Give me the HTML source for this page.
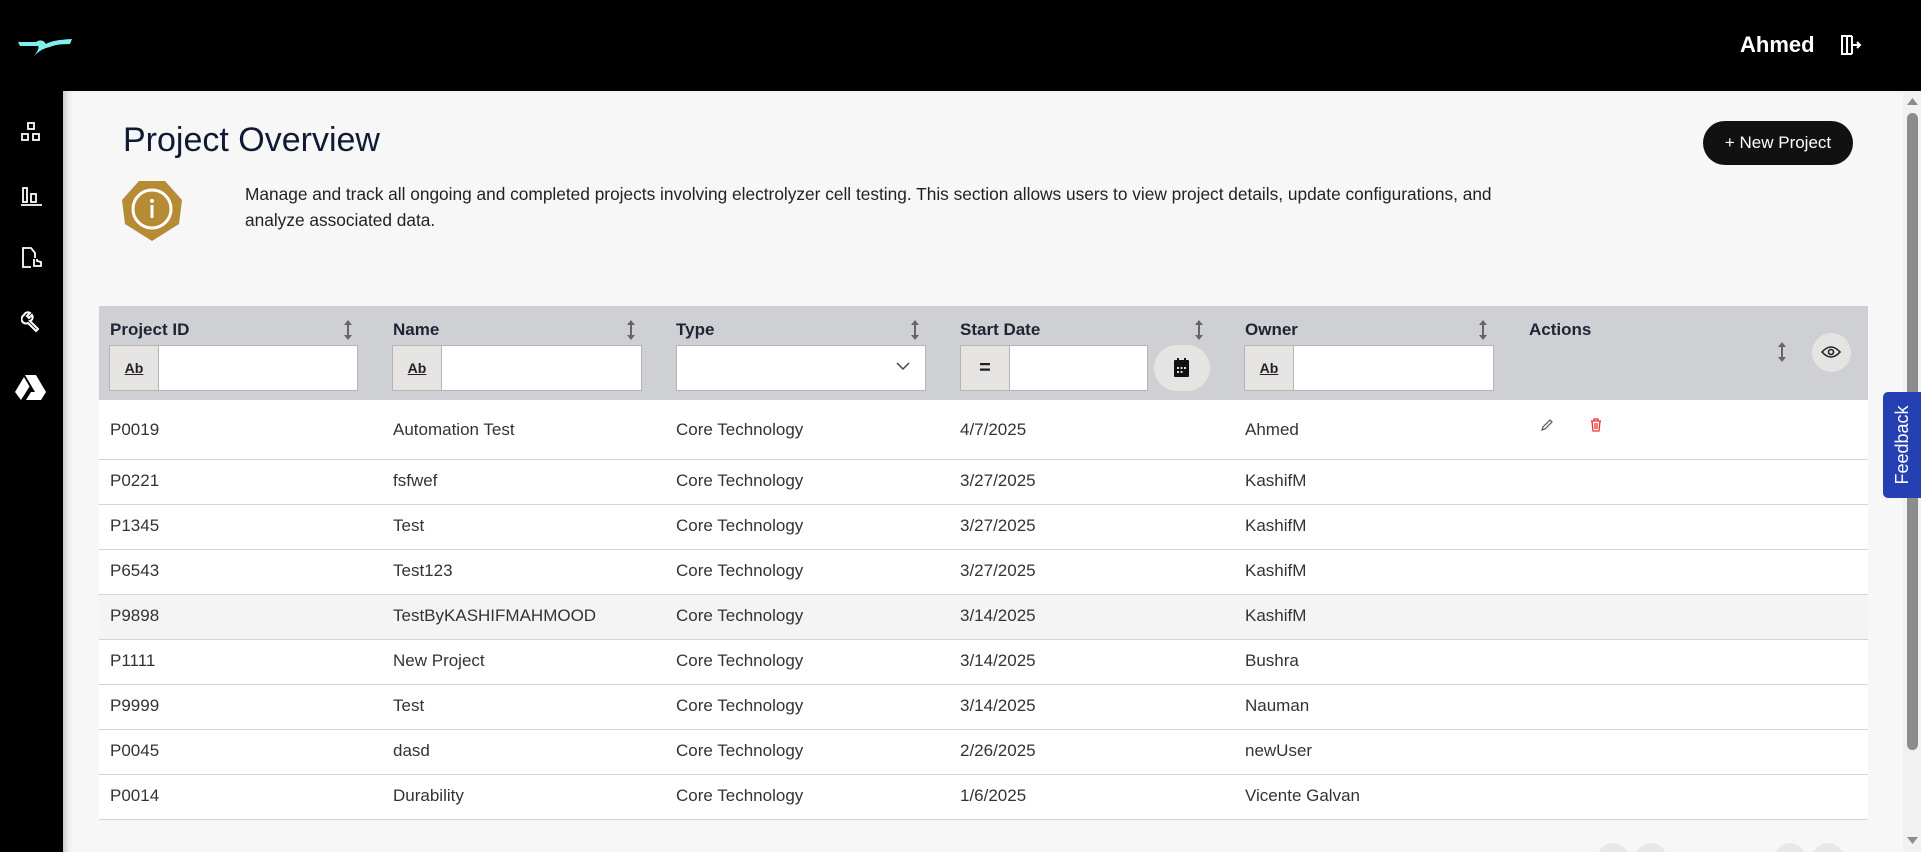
<!DOCTYPE html>
<html style="overflow:hidden;height:852px"><head><meta charset="utf-8"><style>
*{box-sizing:border-box;margin:0;padding:0}
body{width:1921px;height:852px;overflow:hidden;background:#000;font-family:"Liberation Sans",sans-serif;position:relative;color:#222}
.abs{position:absolute}
#panel{left:63px;top:91px;width:1858px;height:761px;background:#f7f7f7;box-shadow:inset 8px 0 8px -6px rgba(0,0,0,.25)}
.th{font-size:17px;font-weight:bold;color:#1d2433}
.cell{font-size:17px;color:#333}
.inp{background:#fff;border:1px solid #b5b5b5;height:46px}
.ab{background:#e6e4e3;border:1px solid #b5b5b5;height:46px;width:50px;font-size:14px;text-align:center;line-height:44px;text-decoration:underline;font-weight:bold;color:#222}
.line{height:1px;background:#d4d4d4;left:99px;width:1769px}
</style></head><body>
<svg class="abs" style="left:16px;top:36px" width="58" height="22" viewBox="0 0 58 22"><path d="M2 6 L20 6 Q26 2 30 8 Q36 4 56 3 L54 8 Q40 8 34 11 Q26 12 18 20 Q24 12 22 10 L4 10 Z" fill="#7ff0f0"/></svg>
<div class="abs" style="left:1740px;top:32px;color:#fff;font-weight:bold;font-size:22px">Ahmed</div>
<svg class="abs" style="left:1838px;top:33px" width="24" height="24" viewBox="0 0 24 24" fill="none" stroke="#fff" stroke-width="2"><path d="M14 3H4v18h10M14 3v18M9 3v18M13 12h9M19 9l3 3-3 3"/></svg>
<svg class="abs" style="left:21px;top:122px" width="20" height="20" viewBox="0 0 20 20" fill="none" stroke="#fff" stroke-width="1.8"><rect x="7" y="1" width="6" height="6"/><rect x="1" y="12" width="6" height="6"/><rect x="12" y="12" width="6" height="6"/></svg>
<svg class="abs" style="left:20px;top:185px" width="22" height="22" viewBox="0 0 22 22" fill="none" stroke="#fff" stroke-width="1.8"><rect x="3" y="3" width="4" height="14"/><rect x="11" y="9" width="5" height="8"/><path d="M1 20h21"/></svg>
<svg class="abs" style="left:21px;top:247px" width="22" height="22" viewBox="0 0 22 22" fill="none" stroke="#fff" stroke-width="1.8"><path d="M10 20H2V1h8l4 5v5"/><path d="M13 12v7h7v-4l-4-1v-2"/></svg>
<svg class="abs" style="left:21px;top:311px" width="22" height="22" viewBox="0 0 22 22" fill="none" stroke="#fff" stroke-width="2"><path d="M3 4a4 4 0 0 1 6-2l-3 3 2 2 3-3a4 4 0 0 1-2 6l8 8-2 2-8-8a4 4 0 0 1-4-8z"/></svg>
<svg class="abs" style="left:15px;top:374px" width="31" height="26" viewBox="0 0 31 26" fill="#fff"><path d="M10 1h11l10 17h-11z"/><path d="M9 3l5.5 9.5L6 26 0 18z"/><path d="M11 26l5-8h15l-5 8z"/></svg>
<div id="panel" class="abs"></div>
<div class="abs" style="left:123px;top:121px;font-size:34px;color:#0f1a33">Project Overview</div>
<svg class="abs" style="left:121px;top:180px" width="62" height="62" viewBox="0 0 62 62"><polygon points="18,1 44,1 61,20 58,44 31,61 4,44 1,20" fill="#b68b35"/><circle cx="31" cy="29" r="19" fill="none" stroke="#fff" stroke-width="3"/><rect x="29.5" y="25" width="3" height="13" fill="#fff"/><circle cx="31" cy="21" r="2" fill="#fff"/></svg>
<div class="abs" style="left:245px;top:181px;width:1310px;font-size:17.3px;line-height:26px;color:#222">Manage and track all ongoing and completed projects involving electrolyzer cell testing. This section allows users to view project details, update configurations, and analyze associated data.</div>
<div class="abs" style="left:1703px;top:121px;width:150px;height:44px;border-radius:22px;background:#111;color:#fff;font-size:17px;line-height:44px;text-align:center">+ New Project</div>
<div class="abs" style="left:99px;top:306px;width:1769px;height:94px;background:#cfd0d3"></div>
<div class="abs" style="left:99px;top:400px;width:1769px;height:420px;background:#fff"></div>
<div class="abs" style="left:99px;top:595px;width:1769px;height:44px;background:#f3f4f3"></div>
<div class="abs th" style="left:110px;top:320px">Project ID</div>
<div class="abs th" style="left:393px;top:320px">Name</div>
<div class="abs th" style="left:676px;top:320px">Type</div>
<div class="abs th" style="left:960px;top:320px">Start Date</div>
<div class="abs th" style="left:1245px;top:320px">Owner</div>
<div class="abs th" style="left:1529px;top:320px">Actions</div>
<svg width="0" height="0" style="position:absolute"><defs><g id="srt"><path d="M5 3v16" stroke="#666" stroke-width="2"/><path d="M1 6l4-5 4 5zM1 16l4 5 4-5z" fill="#666"/></g></defs></svg>
<svg class="abs" style="left:343px;top:319px" width="10" height="22"><use href="#srt"/></svg>
<svg class="abs" style="left:626px;top:319px" width="10" height="22"><use href="#srt"/></svg>
<svg class="abs" style="left:910px;top:319px" width="10" height="22"><use href="#srt"/></svg>
<svg class="abs" style="left:1194px;top:319px" width="10" height="22"><use href="#srt"/></svg>
<svg class="abs" style="left:1478px;top:319px" width="10" height="22"><use href="#srt"/></svg>
<svg class="abs" style="left:1777px;top:341px" width="10" height="22"><use href="#srt"/></svg>
<div class="abs ab" style="left:109px;top:345px">Ab</div><div class="abs inp" style="left:158px;top:345px;width:200px"></div>
<div class="abs ab" style="left:392px;top:345px">Ab</div><div class="abs inp" style="left:441px;top:345px;width:201px"></div>
<div class="abs inp" style="left:676px;top:345px;width:250px"></div>
<svg class="abs" style="left:896px;top:362px" width="14" height="9"><path d="M1 1l6 6 6-6" stroke="#444" stroke-width="1.5" fill="none"/></svg>
<div class="abs ab" style="left:960px;top:345px;text-decoration:none;font-size:20px">=</div><div class="abs inp" style="left:1009px;top:345px;width:139px"></div>
<div class="abs" style="left:1154px;top:345px;width:56px;height:46px;border-radius:23px;background:#e6e4e3"></div>
<svg class="abs" style="left:1174px;top:358px" width="15" height="19" viewBox="0 0 15 19"><rect x="0" y="2" width="15" height="17" rx="1" fill="#111"/><rect x="3" y="0" width="2" height="4" fill="#111"/><rect x="10" y="0" width="2" height="4" fill="#111"/><g fill="#ddd"><rect x="3" y="9" width="2" height="2"/><rect x="6.5" y="9" width="2" height="2"/><rect x="10" y="9" width="2" height="2"/><rect x="3" y="13" width="2" height="2"/><rect x="6.5" y="13" width="2" height="2"/></g></svg>
<div class="abs ab" style="left:1244px;top:345px">Ab</div><div class="abs inp" style="left:1293px;top:345px;width:201px"></div>
<div class="abs" style="left:1812px;top:333px;width:39px;height:39px;border-radius:50%;background:#e6e4e3"></div>
<svg class="abs" style="left:1821px;top:345px" width="20" height="14" viewBox="0 0 20 14" fill="none" stroke="#222" stroke-width="1.6"><path d="M1 7q9-10 18 0q-9 10-18 0z"/><circle cx="10" cy="7" r="2.5"/></svg>
<div class="abs line" style="top:459px"></div><div class="abs line" style="top:504px"></div><div class="abs line" style="top:549px"></div><div class="abs line" style="top:594px"></div><div class="abs line" style="top:639px"></div><div class="abs line" style="top:684px"></div><div class="abs line" style="top:729px"></div><div class="abs line" style="top:774px"></div><div class="abs line" style="top:819px"></div>
<div class="abs cell" style="left:110px;top:420px">P0019</div><div class="abs cell" style="left:393px;top:420px">Automation Test</div><div class="abs cell" style="left:676px;top:420px">Core Technology</div><div class="abs cell" style="left:960px;top:420px">4/7/2025</div><div class="abs cell" style="left:1245px;top:420px">Ahmed</div>
<svg class="abs" style="left:1540px;top:418px" width="14" height="14" viewBox="0 0 14 14" fill="none" stroke="#555" stroke-width="1.2"><path d="M2 12l1-3 7-7 2 2-7 7z"/></svg>
<svg class="abs" style="left:1590px;top:418px" width="12" height="14" viewBox="0 0 12 14" fill="none" stroke="#e33" stroke-width="1.3"><path d="M1 3h10M4 3V1h4v2M2 3l1 10h6l1-10M5 5v6M7 5v6"/></svg>
<div class="abs cell" style="left:110px;top:471px">P0221</div><div class="abs cell" style="left:393px;top:471px">fsfwef</div><div class="abs cell" style="left:676px;top:471px">Core Technology</div><div class="abs cell" style="left:960px;top:471px">3/27/2025</div><div class="abs cell" style="left:1245px;top:471px">KashifM</div>
<div class="abs cell" style="left:110px;top:516px">P1345</div><div class="abs cell" style="left:393px;top:516px">Test</div><div class="abs cell" style="left:676px;top:516px">Core Technology</div><div class="abs cell" style="left:960px;top:516px">3/27/2025</div><div class="abs cell" style="left:1245px;top:516px">KashifM</div>
<div class="abs cell" style="left:110px;top:561px">P6543</div><div class="abs cell" style="left:393px;top:561px">Test123</div><div class="abs cell" style="left:676px;top:561px">Core Technology</div><div class="abs cell" style="left:960px;top:561px">3/27/2025</div><div class="abs cell" style="left:1245px;top:561px">KashifM</div>
<div class="abs cell" style="left:110px;top:606px">P9898</div><div class="abs cell" style="left:393px;top:606px">TestByKASHIFMAHMOOD</div><div class="abs cell" style="left:676px;top:606px">Core Technology</div><div class="abs cell" style="left:960px;top:606px">3/14/2025</div><div class="abs cell" style="left:1245px;top:606px">KashifM</div>
<div class="abs cell" style="left:110px;top:651px">P1111</div><div class="abs cell" style="left:393px;top:651px">New Project</div><div class="abs cell" style="left:676px;top:651px">Core Technology</div><div class="abs cell" style="left:960px;top:651px">3/14/2025</div><div class="abs cell" style="left:1245px;top:651px">Bushra</div>
<div class="abs cell" style="left:110px;top:696px">P9999</div><div class="abs cell" style="left:393px;top:696px">Test</div><div class="abs cell" style="left:676px;top:696px">Core Technology</div><div class="abs cell" style="left:960px;top:696px">3/14/2025</div><div class="abs cell" style="left:1245px;top:696px">Nauman</div>
<div class="abs cell" style="left:110px;top:741px">P0045</div><div class="abs cell" style="left:393px;top:741px">dasd</div><div class="abs cell" style="left:676px;top:741px">Core Technology</div><div class="abs cell" style="left:960px;top:741px">2/26/2025</div><div class="abs cell" style="left:1245px;top:741px">newUser</div>
<div class="abs cell" style="left:110px;top:786px">P0014</div><div class="abs cell" style="left:393px;top:786px">Durability</div><div class="abs cell" style="left:676px;top:786px">Core Technology</div><div class="abs cell" style="left:960px;top:786px">1/6/2025</div><div class="abs cell" style="left:1245px;top:786px">Vicente Galvan</div>
<div class="abs" style="left:1590px;top:840px;width:300px;height:12px;overflow:hidden">
<div class="abs" style="left:7px;top:3px;width:32px;height:32px;border-radius:50%;background:#e8e8e8"></div>
<div class="abs" style="left:45px;top:3px;width:32px;height:32px;border-radius:50%;background:#e8e8e8"></div>
<div class="abs" style="left:184px;top:3px;width:32px;height:32px;border-radius:50%;background:#e8e8e8"></div>
<div class="abs" style="left:222px;top:3px;width:32px;height:32px;border-radius:50%;background:#e8e8e8"></div>
</div>
<div class="abs" style="left:1903px;top:91px;width:18px;height:761px;background:#f1f1f1"></div>
<div class="abs" style="left:1907px;top:113px;width:11px;height:637px;border-radius:6px;background:#8c8c8c"></div>
<svg class="abs" style="left:1907px;top:97px" width="11" height="8"><path d="M0 8L5.5 1 11 8z" fill="#8c8c8c"/></svg>
<svg class="abs" style="left:1907px;top:837px" width="11" height="8"><path d="M0 0L5.5 7 11 0z" fill="#8c8c8c"/></svg>
<div class="abs" style="left:1883px;top:392px;width:38px;height:106px;background:#2440b3;border-radius:5px 0 0 5px"></div>
<div class="abs" style="left:1849px;top:432px;width:106px;height:26px;transform:rotate(-90deg);color:#fff;font-size:18px;text-align:center;line-height:26px">Feedback</div>
</body></html>
